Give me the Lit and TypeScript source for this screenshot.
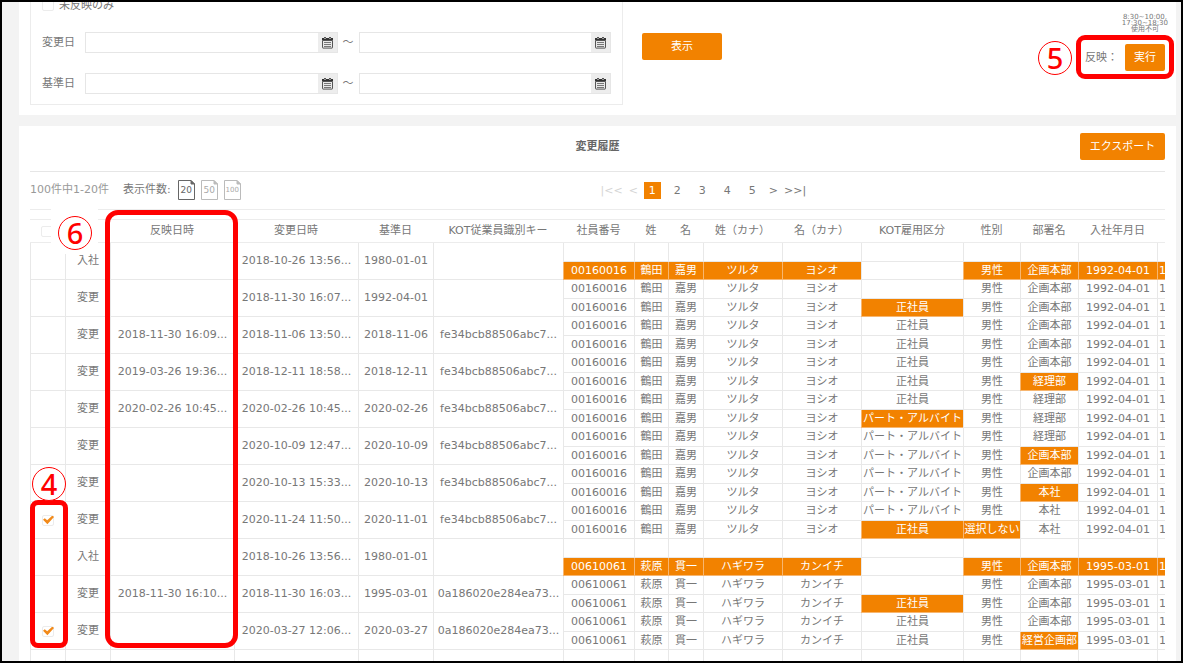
import { LitElement, html, css, nothing } from "lit";
import { customElement, property } from "lit/decorators.js";
import { classMap } from "lit/directives/class-map.js";

interface HistoryRecord {
  kind: string;
  reflectedAt: string;
  changedAt: string;
  baseDate: string;
  key: string;
  before: string[];
  after: string[];
  /** Indexes of the "after" cells that differ from "before". */
  changed: number[];
  selectable?: boolean;
}

const FULL = "パート・アルバイト";
const REG = "正社員";

const tsuruta = (kot: string, dept: string, sex = "男性") => [
  "00160016", "鶴田", "嘉男", "ツルタ", "ヨシオ", kot, sex, dept, "1992-04-01", "1",
];
const hagiwara = (kot: string, dept: string) => [
  "00610061", "萩原", "貫一", "ハギワラ", "カンイチ", kot, "男性", dept, "1995-03-01", "1",
];
const BLANK = Array(10).fill("");
const JOINED = [0, 1, 2, 3, 4, 6, 7, 8, 9];
const KEY_A = "fe34bcb88506abc7...";
const KEY_B = "0a186020e284ea73...";

const HEADERS = [
  "", "反映日時", "変更日時", "基準日", "KOT従業員識別キー", "社員番号", "姓", "名",
  "姓（カナ）", "名（カナ）", "KOT雇用区分", "性別", "部署名", "入社年月日", "",
];

const RECORDS: HistoryRecord[] = [
  { kind: "入社", reflectedAt: "", changedAt: "2018-10-26 13:56...", baseDate: "1980-01-01", key: "",
    before: BLANK, after: tsuruta("", "企画本部"), changed: JOINED },
  { kind: "変更", reflectedAt: "", changedAt: "2018-11-30 16:07...", baseDate: "1992-04-01", key: "",
    before: tsuruta("", "企画本部"), after: tsuruta(REG, "企画本部"), changed: [5] },
  { kind: "変更", reflectedAt: "2018-11-30 16:09...", changedAt: "2018-11-06 13:50...", baseDate: "2018-11-06", key: KEY_A,
    before: tsuruta(REG, "企画本部"), after: tsuruta(REG, "企画本部"), changed: [] },
  { kind: "変更", reflectedAt: "2019-03-26 19:36...", changedAt: "2018-12-11 18:58...", baseDate: "2018-12-11", key: KEY_A,
    before: tsuruta(REG, "企画本部"), after: tsuruta(REG, "経理部"), changed: [7] },
  { kind: "変更", reflectedAt: "2020-02-26 10:45...", changedAt: "2020-02-26 10:45...", baseDate: "2020-02-26", key: KEY_A,
    before: tsuruta(REG, "経理部"), after: tsuruta(FULL, "経理部"), changed: [5] },
  { kind: "変更", reflectedAt: "", changedAt: "2020-10-09 12:47...", baseDate: "2020-10-09", key: KEY_A,
    before: tsuruta(FULL, "経理部"), after: tsuruta(FULL, "企画本部"), changed: [7] },
  { kind: "変更", reflectedAt: "", changedAt: "2020-10-13 15:33...", baseDate: "2020-10-13", key: KEY_A,
    before: tsuruta(FULL, "企画本部"), after: tsuruta(FULL, "本社"), changed: [7] },
  { kind: "変更", reflectedAt: "", changedAt: "2020-11-24 11:50...", baseDate: "2020-11-01", key: KEY_A,
    before: tsuruta(FULL, "本社"), after: tsuruta(REG, "本社", "選択しない"), changed: [5, 6], selectable: true },
  { kind: "入社", reflectedAt: "", changedAt: "2018-10-26 13:56...", baseDate: "1980-01-01", key: "",
    before: BLANK, after: hagiwara("", "企画本部"), changed: JOINED },
  { kind: "変更", reflectedAt: "2018-11-30 16:10...", changedAt: "2018-11-30 16:03...", baseDate: "1995-03-01", key: KEY_B,
    before: hagiwara("", "企画本部"), after: hagiwara(REG, "企画本部"), changed: [5] },
  { kind: "変更", reflectedAt: "", changedAt: "2020-03-27 12:06...", baseDate: "2020-03-27", key: KEY_B,
    before: hagiwara(REG, "企画本部"), after: hagiwara(REG, "経営企画部"), changed: [7], selectable: true },
  { kind: "", reflectedAt: "", changedAt: "", baseDate: "", key: "",
    before: BLANK, after: BLANK, changed: [] },
];

const base = css`
  * { box-sizing: border-box; }
  button, input {
    font: inherit;
    color: inherit;
    margin: 0;
    padding: 0;
  }
  button { cursor: pointer; }
  .primary {
    height: 27px;
    border: 0;
    border-radius: 2px;
    background: #f28200;
    color: #fff;
  }
  .check {
    appearance: none;
    display: block;
    position: relative;
    flex: none;
    width: 12px;
    height: 11px;
    border: 1px solid #ececec;
    border-radius: 2px;
    background: #fff;
  }
  .check:checked::after {
    content: "";
    position: absolute;
    inset: 0 -1px 0 0;
    background: #f28a1a;
    clip-path: polygon(0 48%, 16% 30%, 38% 54%, 86% 0, 100% 18%, 40% 96%);
  }
`;

@customElement("date-field")
export class DateField extends LitElement {
  @property() label = "";

  static styles = [base, css`
    :host { display: block; }
    .field {
      display: flex;
      height: 21px;
      border: 1px solid #e6e6e6;
    }
    .text {
      flex: 1;
      min-width: 0;
      border: 0;
      background: #fff;
      padding: 0 4px;
    }
    .pick {
      display: flex;
      align-items: center;
      justify-content: center;
      width: 19px;
      border: 0;
      background: #ededed;
    }
  `];

  render() {
    return html`<div class="field">
      <input class="text" type="text" aria-label=${this.label} />
      <button class="pick" aria-label="カレンダー">
        <svg width="11" height="12" viewBox="0 0 11 12">
          <path d="M0 1h11v2.6H0z" fill="#333" />
          <path d="M2 0h2v2H2zM7 0h2v2H7z" fill="#555" />
          <path d="M2.5 1h1v1h-1zM7.5 1h1v1h-1z" fill="#ddd" />
          <rect x="0.5" y="3.5" width="10" height="7.6" rx="0.5" fill="#e8e8e8" stroke="#555" />
          <path d="M2 5.5h7M2 7.5h7M2 9.5h7" stroke="#777" />
        </svg>
      </button>
    </div>`;
  }
}

@customElement("history-table")
export class HistoryTable extends LitElement {
  static styles = [base, css`
    :host { display: block; overflow: hidden; }
    .table {
      table-layout: fixed;
      width: 1207px;
      border-collapse: separate;
      border-spacing: 0;
      line-height: 14px;
      text-align: center;
    }
    .select { width: 35px; }
    .kind { width: 45px; }
    .stamp { width: 124px; }
    .date { width: 75px; }
    .key { width: 130px; }
    .number { width: 71px; }
    .name { width: 34px; }
    .last-name { width: 35px; }
    .kana { width: 79px; }
    .kot { width: 102px; }
    .short { width: 57px; }
    .dept { width: 58px; }
    .extra { width: 80px; }
    th {
      height: 24px;
      padding: 0;
      font-weight: 400;
      border-top: 1px solid #ececec;
      border-bottom: 1px solid #ececec;
    }
    td {
      height: 18px;
      padding: 0;
      white-space: nowrap;
      border-left: 1px solid #e8e8e8;
      border-bottom: 1px solid #e8e8e8;
    }
    .upper td { height: 19px; }
    .table .tick { padding-left: 11px; }
    .table .right { text-align: right; padding-right: 11px; }
    .table .left { text-align: left; padding-left: 1px; }
    .table .changed {
      background: #f28200;
      color: #fff;
      border-color: #f7b670;
    }
  `];

  private values(values: string[], changed: number[] = []) {
    return values.map((v, i) => html`<td class=${classMap({
      changed: changed.includes(i),
      left: i === 9,
    })}>${v}</td>`);
  }

  render() {
    return html`<table class="table">
      <colgroup>
        <col class="select" /><col class="kind" /><col class="stamp" /><col class="stamp" />
        <col class="date" /><col class="key" /><col class="number" /><col class="name" />
        <col class="last-name" /><col class="kana" /><col class="kana" /><col class="kot" />
        <col class="short" /><col class="dept" /><col class="kana" /><col class="extra" />
      </colgroup>
      <thead>
        <tr>
          <th class="tick"><input class="check" type="checkbox" aria-label="すべて選択" /></th>
          ${HEADERS.map((h) => html`<th>${h}</th>`)}
        </tr>
      </thead>
      <tbody>
        ${RECORDS.map((r) => html`
          <tr class="upper">
            <td class="tick" rowspan="2">
              ${r.selectable
                ? html`<input class="check" type="checkbox" aria-label="選択" checked />`
                : nothing}
            </td>
            <td class="right" rowspan="2">${r.kind}</td>
            <td rowspan="2">${r.reflectedAt}</td>
            <td rowspan="2">${r.changedAt}</td>
            <td rowspan="2">${r.baseDate}</td>
            <td rowspan="2">${r.key}</td>
            ${this.values(r.before)}
          </tr>
          <tr>${this.values(r.after, r.changed)}</tr>
        `)}
      </tbody>
    </table>`;
  }
}

@customElement("app-root")
export class AppRoot extends LitElement {
  static styles = [base, css`
    :host {
      display: block;
      font: 11px/14px "DejaVu Sans", "Noto Sans CJK JP", sans-serif;
      color: #777;
    }
    .frame {
      position: relative;
      height: 100vh;
      overflow: hidden;
      border: 2px solid #000;
      background: #f3f3f3;
    }
    .panel {
      margin: 0 5px 11px 17px;
      padding: 0 11px;
      background: #fff;
    }
    .search {
      display: flex;
      align-items: flex-start;
      padding-bottom: 10px;
    }
    .conditions {
      flex: 0 1 593px;
      padding: 0 11px 10px;
      border: 1px solid #ececec;
      border-top: 0;
    }
    .only {
      display: flex;
      align-items: center;
      gap: 5px;
      height: 7px;
      margin-bottom: 23px;
    }
    .range {
      display: grid;
      grid-template-columns: 43px 1fr 21px 1fr;
      align-items: center;
      height: 21px;
    }
    .range + .range { margin-top: 20px; }
    .tilde { text-align: center; }
    .show { width: 80px; margin: 31px 0 0 19px; }
    .apply {
      display: flex;
      flex-direction: column;
      align-items: flex-end;
      margin: 12px 0 0 auto;
    }
    .hours {
      margin: 0 -3px 0 0;
      font-size: 7px;
      line-height: 6px;
      text-align: center;
    }
    .run {
      display: flex;
      align-items: center;
      gap: 7px;
      margin-top: 12px;
    }
    .run .primary { width: 40px; }
    .title-bar {
      display: grid;
      grid-template-columns: 1fr auto 1fr;
      align-items: center;
      padding: 7px 0 11px;
      border-bottom: 1px solid #e6e6e6;
    }
    .title {
      grid-column: 2;
      margin: 0;
      font-size: 11px;
      font-weight: 700;
      color: #666;
    }
    .export { justify-self: end; width: 85px; }
    .tools {
      display: grid;
      grid-template-columns: 1fr 1fr;
      align-items: center;
      height: 38px;
      margin-bottom: 9px;
      border-bottom: 1px solid #ececec;
    }
    .count { display: flex; align-items: center; padding-bottom: 2px; color: #999; }
    .per { margin: 0 7px 0 14px; color: #777; }
    .size {
      position: relative;
      width: 17px;
      height: 20px;
      margin-right: 6px;
      border: 0;
      background: none;
      font-size: 9px;
      line-height: 20px;
      color: #aaa;
      white-space: nowrap;
    }
    .size svg { position: absolute; inset: 0; color: #bbb; }
    .size.on, .size.on svg { color: #666; }
    .size.three { font-size: 7px; }
    .pager { display: flex; align-items: center; gap: 8px; padding-left: 3px; }
    .pager a {
      min-width: 17px;
      line-height: 17px;
      text-align: center;
      color: #777;
      text-decoration: none;
    }
    .pager .off { color: #d5d5d5; }
    .pager .arrow { min-width: 0; margin-right: -2px; }
    .pager .current { background: #f28200; color: #fff; }
    .mark {
      position: absolute;
      border: 5px solid #f00;
      pointer-events: none;
    }
    .mark-run { top: 33px; right: 7px; width: 98px; height: 44px; border-radius: 9px; }
    .mark-date { top: 208px; left: 103px; width: 133px; height: 438px; border-radius: 13px; }
    .mark-check { top: 498px; left: 28px; width: 38px; height: 148px; border-radius: 8px; }
    .step {
      position: absolute;
      width: 34px;
      height: 34px;
      border: 1px solid #f00;
      border-radius: 50%;
      background: #fff;
      color: #f00;
      font: 500 29px/31px "Noto Sans", sans-serif;
      text-align: center;
    }
    .step-run { top: 39px; right: 109px; }
    .step-check { top: 465px; left: 30px; }
    .backing {
      position: absolute;
      top: 204px;
      left: 49px;
      width: 47px;
      height: 48px;
      background: #fff;
    }
    .step-date { top: 214px; left: 56px; }
  `];

  private size(n: number) {
    return html`<button class=${classMap({ size: true, on: n === 20, three: n > 99 })}>
      <svg width="17" height="20" viewBox="0 0 17 20" fill="none">
        <path d="M0.5 0.5H13L16.5 4V19.5H0.5Z" stroke="currentColor" />
        <path d="M13 0.5L16.5 4H13Z" fill="currentColor" stroke="currentColor" />
      </svg>${n}
    </button>`;
  }

  private range(label: string) {
    return html`<div class="range">
      <span>${label}</span>
      <date-field label="${label} 開始"></date-field>
      <span class="tilde">～</span>
      <date-field label="${label} 終了"></date-field>
    </div>`;
  }

  render() {
    return html`<main class="frame">
      <section class="panel search">
        <div class="conditions">
          <label class="only"><input class="check" type="checkbox" />未反映のみ</label>
          ${this.range("変更日")} ${this.range("基準日")}
        </div>
        <button class="primary show">表示</button>
        <div class="apply">
          <p class="hours">8:30~10:00,<br />17:30~18:30<br />使用不可</p>
          <div class="run"><span>反映：</span><button class="primary">実行</button></div>
        </div>
      </section>

      <section class="panel">
        <header class="title-bar">
          <h1 class="title">変更履歴</h1>
          <button class="primary export">エクスポート</button>
        </header>
        <div class="tools">
          <div class="count">
            <span>100件中1-20件</span><span class="per">表示件数:</span>
            ${[20, 50, 100].map((n) => this.size(n))}
          </div>
          <nav class="pager">
            <a class="arrow off">|&lt;&lt;</a><a class="arrow off">&lt;</a>
            <a class="current" href="#1">1</a>
            ${[2, 3, 4, 5].map((n) => html`<a href="#${n}">${n}</a>`)}
            <a class="arrow" href="#next">&gt;</a><a class="arrow" href="#last">&gt;&gt;|</a>
          </nav>
        </div>
        <history-table></history-table>
      </section>

      <div class="backing"></div>
      <div class="mark mark-run"></div>
      <div class="mark mark-date"></div>
      <div class="mark mark-check"></div>
      <span class="step step-run">5</span>
      <span class="step step-date">6</span>
      <span class="step step-check">4</span>
    </main>`;
  }
}
